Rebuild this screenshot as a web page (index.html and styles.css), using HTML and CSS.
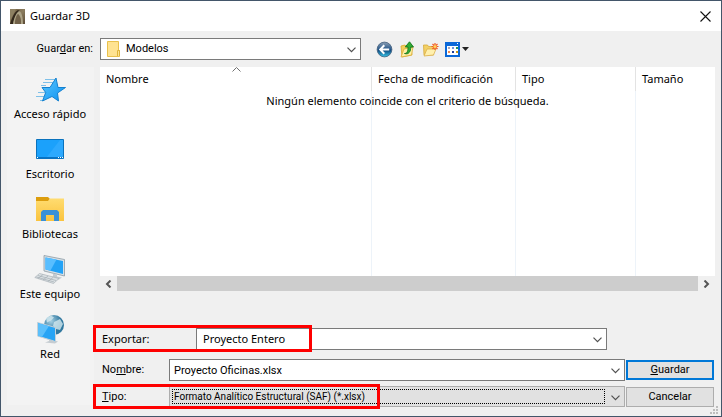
FILE: index.html
```html
<!DOCTYPE html>
<html lang="es">
<head>
<meta charset="utf-8">
<title>Guardar 3D</title>
<link rel="stylesheet" href="styles.css">
</head>
<body>
<form class="window">
  <header class="titlebar">
    <svg class="app-icon" viewBox="0 0 15 15" aria-hidden="true">
      <defs><linearGradient id="app" x2="1" y2="1"><stop stop-color="#6d5a40"/><stop offset=".5" stop-color="#8a7c5e"/><stop offset="1" stop-color="#5a4a35"/></linearGradient></defs>
      <rect width="15" height="15" fill="url(#app)"/>
      <path d="M0 0h6L2 8l-2 3z" fill="#8d8062"/>
      <path d="M0 15C2 9 4 3 8 1l2 1C6 5 4 10 3 15z" fill="#33281b"/>
      <path d="M3 15C4 9 6 4 9 2c3 1 4 7 4 13h-2C11 9 10 6 8 5 6 7 5 11 5 15z" fill="#aca387"/>
      <path d="M5 15c0-4 1-8 3-10 2 2 3 5 3 10z" fill="#716149"/>
    </svg>
    <h1 class="title">Guardar 3D</h1>
    <button class="close" type="button" aria-label="Cerrar">
      <svg viewBox="0 0 11 11"><path d="M.5.5l10 10m0-10l-10 10" fill="none" stroke="#111" stroke-width="1.1"/></svg>
    </button>
  </header>

  <div class="toolbar">
    <label class="ui toolbar-label" for="folder">Guar<u>d</u>ar en:</label>
    <div class="combo combo-folder">
      <svg class="folder-icon" viewBox="0 0 14 18" aria-hidden="true"><path d="M.5 1.500h11v9h1v6H.5z" fill="#ffe391" stroke="#e9c14c"/><path d="M10.500 16v-5.500h2V16" fill="#ffe391" stroke="#dfb53a"/></svg>
      <select class="ui" id="folder"><option>Modelos</option></select>
      <svg class="chevron" viewBox="0 0 9 6" aria-hidden="true"><path d="M.5.7l4 4 4-4"/></svg>
    </div>
    <div class="tools">
      <button type="button" aria-label="Atrás">
        <svg class="tool" viewBox="0 0 17 17"><defs><linearGradient id="orb" x2="0" y2="1"><stop stop-color="#8d9fb4"/><stop offset=".45" stop-color="#2e5d8e"/><stop offset=".55" stop-color="#114b80"/><stop offset="1" stop-color="#35c5e8"/></linearGradient></defs><circle cx="8.500" cy="8.500" r="7.400" fill="url(#orb)" stroke="#46617e" stroke-width=".8"/><path d="M8.300 4.300L4.200 8.500l4.100 4.200M4.800 8.500h8.400" fill="none" stroke="#fff" stroke-width="2"/></svg>
      </button>
      <button type="button" aria-label="Subir un nivel">
        <svg class="tool" viewBox="0 0 17 17"><path d="M2 5l4-1 1 1h5l1 9-10 2z" fill="#f3cf5b" stroke="#d7a62d" stroke-width=".8"/><path d="M2 16l3-8 9-2-1.500 8z" fill="#fff0a6" stroke="#dcae3a" stroke-width=".8"/><path d="M5.500 12.500c3 0 3.500-3 3.500-6.500H6.300L10.500.8l4 5.200h-2.700c0 4-1.800 8-6.300 6.500z" fill="#2fae35" stroke="#16751c" stroke-width=".9"/></svg>
      </button>
      <button type="button" aria-label="Crear nueva carpeta">
        <svg class="tool" viewBox="0 0 17 17"><path d="M1.500 4h4l1 1.500h5V14H2z" fill="#f2d066" stroke="#d6a93b" stroke-width=".8"/><path d="M2 15l3-7h9l-2.500 6z" fill="#fff0ae" stroke="#dcb04a" stroke-width=".8"/><path d="M13 2v7M9.500 5.500h7M10.500 3l5 5m0-5l-5 5" stroke="#f15a22" stroke-width="1.200"/><circle cx="13" cy="5.500" r="1.600" fill="#ffd25a"/></svg>
      </button>
      <button type="button" aria-label="Menú Ver">
        <svg class="tool-view" viewBox="0 0 24 15"><path d="M1 1h13v13H1z" fill="#fff" stroke="#0b68d8" stroke-width="2"/><path d="M0 0h15v4H0z" fill="#0b68d8"/><path d="M12 1h1v1h-1z" fill="#fff"/><path d="M3 5h2v2H3z" fill="#aaa6b8"/><path d="M7 5h2v2H7z" fill="#6e92dc"/><path d="M11 5h2v2h-2z" fill="#24955a"/><path d="M3 9h2v2H3z" fill="#f08a50"/><path d="M7 9h2v2H7z" fill="#1d3f9c"/><path d="M11 9h2v2h-2z" fill="#d09a14"/><path d="M17 5h7l-3.500 4z" fill="#222"/></svg>
      </button>
    </div>
  </div>

  <div class="main">
    <nav class="places">
      <a class="place" href="#rapido">
        <svg viewBox="0 0 32 32"><defs><linearGradient id="blue" x2="1" y2="1"><stop stop-color="#5cc8ff"/><stop offset="1" stop-color="#0a8ff0"/></linearGradient></defs><path d="M11 5.500h10M9 8.500h10M7 11.500h5M4 18.500h9M2 22.500h8M6 26.500h3" stroke="#7fc0e8"/><path d="M22 4l2 9.500h7.500l-8 5.500 1 8-6.500-4.500L8.500 27l3.200-8.500L8 13.500h8z" fill="url(#blue)" stroke="#1581cf"/></svg>
        Acceso rápido</a>
      <a class="place" href="#escritorio">
        <svg viewBox="0 0 32 32"><path d="M2.500 5.500h27v19h-27z" fill="#1ba1fb" stroke="#0a72bd"/><path d="M12 24L26 6h3v17z" fill="#35adff" opacity=".7"/><path d="M3 23h26v1.500H3z" fill="#0873c4"/><path d="M3 23.500h1m20 0h1m1 0h1m1 0h1" stroke="#fff"/></svg>
        Escritorio</a>
      <a class="place" href="#bibliotecas">
        <svg viewBox="0 0 32 32"><defs><linearGradient id="lib" x2="0" y2="1"><stop stop-color="#ffdc70"/><stop offset="1" stop-color="#fac33e"/></linearGradient></defs><path d="M2 3h12l2 2-2 3H2z" fill="#dc9d0d"/><path d="M2 7h12l2-2.500h14V27H2z" fill="url(#lib)"/><path d="M7 27v-9l2-2h14l2 2v9h-5v-6h-8v6z" fill="#3990d6"/></svg>
        Bibliotecas</a>
      <a class="place" href="#equipo">
        <svg viewBox="0 0 32 32"><path d="M10 1.500l20.500 4v16.500L10 17z" fill="#d8e0e6" stroke="#8c9aa4" stroke-width=".8"/><path d="M11.500 3.500l17.500 3.500v13l-17.500-4.500z" fill="#22a2f6"/><path d="M11.500 3.500l11 2-6 11-5-1z" fill="#58beff"/><path d="M19 19.500l4 1v2l5 1-3 2-10-2 4-1z" fill="#c3cbd1"/><path d="M5.500 19.500L25 24.500l-5.500 5L.8 23.500z" fill="#dce1e4" stroke="#a9b1b7" stroke-width=".7"/><path d="M4 21.500l18 5M2.500 23l17.500 5M9 20.500l-5 4M14 22l-5 4M19 23.500l-5 4" stroke="#a4adb3" stroke-width=".7"/></svg>
        Este equipo</a>
      <a class="place" href="#red">
        <svg viewBox="0 0 32 32"><defs><radialGradient id="globe" cx=".35" cy=".3"><stop stop-color="#a6d0e3"/><stop offset="1" stop-color="#31789f"/></radialGradient></defs><circle cx="20" cy="11" r="10" fill="url(#globe)"/><path d="M12 4l5-2.500 3 2-3 3-4 2zM20 8l6-3 3 5-3 6-4-1-3-3z" fill="#d3e9ef" opacity=".8"/><path d="M15 25l4 1 5 1.500-3 2-10-1 4-1.500z" fill="#c5ccd1"/><path d="M3.500 8.500l18 5v14l-18-5.500z" fill="#27a4f5" stroke="#c5d1d8"/><path d="M4 9l11 3-7 11-4-1z" fill="#5bbffb"/></svg>
        Red</a>
    </nav>

    <div class="content">
      <div class="listing">
        <svg class="sort" viewBox="0 0 9 5" aria-hidden="true"><path d="M.5 4.500l4-4 4 4"/></svg>
        <table>
          <colgroup><col><col class="col-date"><col class="col-type"><col class="col-size"></colgroup>
          <thead><tr><th>Nombre</th><th>Fecha de modificación</th><th>Tipo</th><th>Tamaño</th></tr></thead>
          <tbody><tr><td></td><td></td><td></td><td></td></tr></tbody>
        </table>
        <p class="empty">Ningún elemento coincide con el criterio de búsqueda.</p>
      </div>
      <div class="scrollbar">
        <button type="button" aria-label="Desplazar a la izquierda"><svg viewBox="0 0 7 8"><path d="M5.500.5L2 4l3.500 3.500"/></svg></button>
        <div class="thumb"></div>
        <button type="button" aria-label="Desplazar a la derecha"><svg viewBox="0 0 7 8"><path d="M1.500.5L5 4 1.500 7.500"/></svg></button>
      </div>

      <div class="row row-export">
        <label for="export">Exportar:</label>
        <div class="combo">
          <select id="export"><option>Proyecto Entero</option></select>
          <svg class="chevron" viewBox="0 0 9 6" aria-hidden="true"><path d="M.5.7l4 4 4-4"/></svg>
        </div>
        <span class="mark mark-export"></span>
      </div>
      <div class="row row-name ui">
        <label for="name">No<u>m</u>bre:</label>
        <div class="combo">
          <input id="name" type="text" value="Proyecto Oficinas.xlsx">
          <svg class="chevron" viewBox="0 0 9 6" aria-hidden="true"><path d="M.5.7l4 4 4-4"/></svg>
        </div>
        <button class="button primary" type="button"><u>G</u>uardar</button>
      </div>
      <div class="row row-type ui">
        <label for="type"><u>T</u>ipo:</label>
        <div class="combo combo-focus">
          <select id="type"><option>Formato Analítico Estructural (SAF) (*.xlsx)</option></select>
          <svg class="chevron" viewBox="0 0 9 6" aria-hidden="true"><path d="M.5.7l4 4 4-4"/></svg>
        </div>
        <button class="button" type="button">Cancelar</button>
        <span class="mark mark-type"></span>
      </div>
    </div>
  </div>
  <svg class="grip" viewBox="0 0 9 9" aria-hidden="true"><path d="M6 0h2v2H6zM3 3h2v2H3zM6 3h2v2H6zM0 6h2v2H0zM3 6h2v2H3zM6 6h2v2H6z" fill="#bdbdbd"/></svg>
</form>
</body>
</html>
```
FILE: styles.css
```css
* {
  box-sizing: border-box;
}

body {
  margin: 0;
  color: #000;
  font: 11px/16px "Noto Sans", "Open Sans", sans-serif;
}

button,
input,
select {
  margin: 0;
  color: inherit;
  font: inherit;
}

button {
  padding: 0;
  border: 0;
  background: none;
}

svg {
  display: block;
}

.ui,
.combo .ui {
  font-family: Roboto, "Liberation Sans", sans-serif;
}

.window {
  position: relative;
  min-height: 100vh;
  border: 1px solid #43566a;
  background: #f0f0f0;
}

.titlebar {
  display: flex;
  align-items: center;
  height: 30px;
  padding: 0 10px 0 9px;
  background: #fff;
}

.app-icon {
  width: 15px;
  height: 15px;
}

.title {
  flex: 1;
  margin: 0 0 0 5px;
  font-size: 11px;
  font-weight: 400;
}

.close svg {
  width: 11px;
  height: 11px;
}

.toolbar {
  display: flex;
  align-items: center;
  padding: 7px 0;
}

.toolbar-label {
  width: 99px;
  padding-right: 7px;
  text-align: right;
}

.combo {
  position: relative;
}

.combo-folder {
  width: 261px;
}

.combo select,
.combo input {
  display: block;
  width: 100%;
  height: 22px;
  padding: 0 20px 0 4px;
  border: 1px solid #7a7a7a;
  border-radius: 0;
  outline: 0;
  background: #fff;
  appearance: none;
}

.combo-folder select {
  padding-left: 25px;
}

.folder-icon {
  position: absolute;
  top: 2px;
  left: 7px;
  width: 14px;
  height: 18px;
}

.chevron {
  position: absolute;
  top: 9px;
  right: 5px;
  width: 9px;
  height: 6px;
  fill: none;
  stroke: #505050;
  stroke-width: 1.2;
  pointer-events: none;
}

.tools {
  display: flex;
  align-items: center;
  gap: 6px;
  margin-left: 15px;
}

.tool {
  width: 17px;
  height: 17px;
}

.tool-view {
  width: 24px;
  height: 15px;
}

.main {
  display: flex;
  gap: 6px;
  padding: 0 6px 9px;
}

.places {
  display: flex;
  flex: none;
  flex-direction: column;
  gap: 12px;
  width: 87px;
  margin-bottom: 2px;
  padding: 7px 1px 0 0;
  background: #f3f3f3;
}

.place {
  color: inherit;
  text-align: center;
  text-decoration: none;
  white-space: nowrap;
}

.place svg {
  width: 32px;
  height: 32px;
  margin: 0 auto;
}

.content {
  flex: 1;
  min-width: 0;
}

.listing {
  position: relative;
  background: #fff;
}

.listing table {
  width: 100%;
  border-collapse: separate;
  border-spacing: 0;
  table-layout: fixed;
}

.col-date {
  width: 144px;
}

.col-type {
  width: 120px;
}

.col-size {
  width: 79px;
}

th {
  height: 24px;
  padding: 0 0 0 6px;
  border-right: 1px solid #e3e3e3;
  font-weight: 400;
  text-align: left;
  white-space: nowrap;
}

td {
  height: 185px;
  padding: 0;
  border-right: 1px solid #edf3f9;
}

th:last-child,
td:last-child {
  border-right: 0;
}

.sort {
  position: absolute;
  top: 0;
  left: 132px;
  width: 9px;
  height: 5px;
  fill: none;
  stroke: #707070;
}

.empty {
  position: absolute;
  top: 26px;
  right: 0;
  left: 0;
  margin: 0;
  text-align: center;
}

.scrollbar {
  display: flex;
  height: 15px;
}

.scrollbar button {
  display: flex;
  flex: none;
  align-items: center;
  justify-content: center;
  width: 17px;
}

.scrollbar svg {
  width: 7px;
  height: 8px;
  fill: none;
  stroke: #555;
  stroke-width: 2;
}

.thumb {
  flex: 1;
  background: #cdcdcd;
}

.row {
  position: relative;
  display: grid;
  align-items: center;
}

.row label {
  padding-left: 2px;
}

.row-export {
  grid-template-columns: 96px 1fr;
  margin-top: 37px;
  padding-right: 108px;
}

.row-name,
.row-type {
  grid-template-columns: 69px 1fr 88px;
  column-gap: 1px;
  padding-right: 1px;
}

.row-name .combo,
.row-type .combo {
  margin-left: -1px;
}

.row-name {
  margin-top: 9px;
}

.row-type {
  margin-top: 5px;
}

.row-export select {
  padding-left: 6px;
}

.row-type select {
  height: 21px;
  border-color: #adadad;
  background: #e1e1e1;
  font-size: 10px;
}

.combo-focus::after {
  position: absolute;
  inset: 3px 20px 3px 3px;
  border: 1px dotted #000;
  content: "";
  pointer-events: none;
}

.button {
  height: 20px;
  border: 1px solid #adadad;
  background: #e1e1e1;
}

.primary {
  border: 2px solid #0078d7;
}

.mark {
  position: absolute;
  left: -7px;
  border: 3px solid #fe0000;
  pointer-events: none;
}

.mark-export {
  top: -3px;
  bottom: -2px;
  width: 219px;
}

.mark-type {
  top: -2px;
  bottom: -2px;
  width: 287px;
}

.grip {
  position: absolute;
  right: 2px;
  bottom: 1px;
  width: 9px;
  height: 9px;
}
```
